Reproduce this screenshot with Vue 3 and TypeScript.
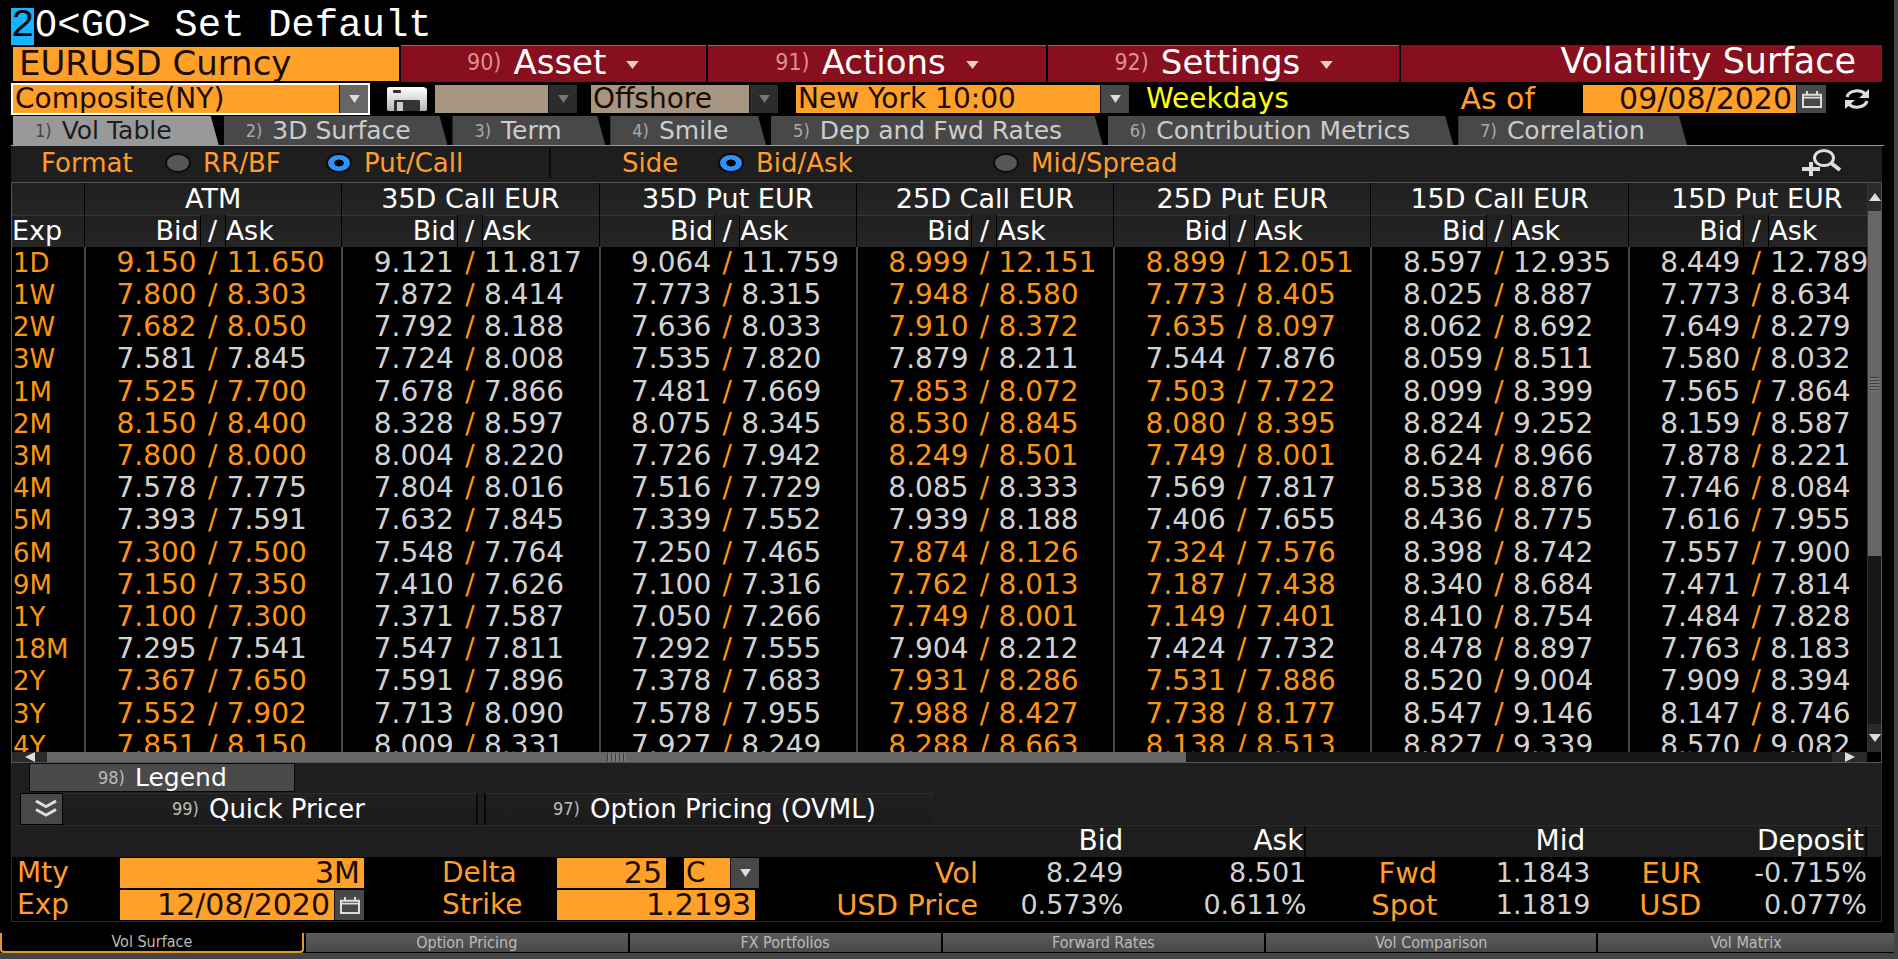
<script setup lang="ts">
import { ref } from 'vue'

const menus = [
  { key: '90)', label: 'Asset' },
  { key: '91)', label: 'Actions' },
  { key: '92)', label: 'Settings' },
]
const tabs = ['Vol Table', '3D Surface', 'Term', 'Smile', 'Dep and Fwd Rates', 'Contribution Metrics', 'Correlation']
const columns = ['ATM', '35D Call EUR', '35D Put EUR', '25D Call EUR', '25D Put EUR', '15D Call EUR', '15D Put EUR']
const screens = ['Vol Surface', 'Option Pricing', 'FX Portfolios', 'Forward Rates', 'Vol Comparison', 'Vol Matrix']
const format = ref('pc')
const side = ref('ba')
const mty = ref('3M')
const expiry = ref('12/08/2020')
const delta = ref('25')
const strike = ref('1.2193')
const asOf = ref('09/08/2020')

// Columns quoted directly by the composite source; the others are interpolated.
const quoted = [0, 3, 4]
// Tenors with no direct quote.
const derived = ['3W', '4M', '5M', '18M']

const raw = `1D 9.150 11.650 9.121 11.817 9.064 11.759 8.999 12.151 8.899 12.051 8.597 12.935 8.449 12.789
1W 7.800 8.303 7.872 8.414 7.773 8.315 7.948 8.580 7.773 8.405 8.025 8.887 7.773 8.634
2W 7.682 8.050 7.792 8.188 7.636 8.033 7.910 8.372 7.635 8.097 8.062 8.692 7.649 8.279
3W 7.581 7.845 7.724 8.008 7.535 7.820 7.879 8.211 7.544 7.876 8.059 8.511 7.580 8.032
1M 7.525 7.700 7.678 7.866 7.481 7.669 7.853 8.072 7.503 7.722 8.099 8.399 7.565 7.864
2M 8.150 8.400 8.328 8.597 8.075 8.345 8.530 8.845 8.080 8.395 8.824 9.252 8.159 8.587
3M 7.800 8.000 8.004 8.220 7.726 7.942 8.249 8.501 7.749 8.001 8.624 8.966 7.878 8.221
4M 7.578 7.775 7.804 8.016 7.516 7.729 8.085 8.333 7.569 7.817 8.538 8.876 7.746 8.084
5M 7.393 7.591 7.632 7.845 7.339 7.552 7.939 8.188 7.406 7.655 8.436 8.775 7.616 7.955
6M 7.300 7.500 7.548 7.764 7.250 7.465 7.874 8.126 7.324 7.576 8.398 8.742 7.557 7.900
9M 7.150 7.350 7.410 7.626 7.100 7.316 7.762 8.013 7.187 7.438 8.340 8.684 7.471 7.814
1Y 7.100 7.300 7.371 7.587 7.050 7.266 7.749 8.001 7.149 7.401 8.410 8.754 7.484 7.828
18M 7.295 7.541 7.547 7.811 7.292 7.555 7.904 8.212 7.424 7.732 8.478 8.897 7.763 8.183
2Y 7.367 7.650 7.591 7.896 7.378 7.683 7.931 8.286 7.531 7.886 8.520 9.004 7.909 8.394
3Y 7.552 7.902 7.713 8.090 7.578 7.955 7.988 8.427 7.738 8.177 8.547 9.146 8.147 8.746
4Y 7.851 8.150 8.009 8.331 7.927 8.249 8.288 8.663 8.138 8.513 8.827 9.339 8.570 9.082`

const rows = raw.split('\n').map((line) => {
  const [tenor, ...v] = line.split(' ')
  return {
    tenor,
    quotes: columns.map((_, i) => ({
      bid: v[i * 2],
      ask: v[i * 2 + 1],
      live: quoted.includes(i) && !derived.includes(tenor),
    })),
  }
})
</script>

<template>
  <main class="terminal">
    <div class="screen">
      <div class="command"><span class="cursor">2</span><span class="zero">0</span>&lt;GO&gt; Set Default</div>

      <header class="titlebar">
        <div class="security">EURUSD Curncy</div>
        <button v-for="m in menus" :key="m.key" class="menu">
          <span class="num">{{ m.key }}</span><span>{{ m.label }}</span>
          <svg class="caret" viewBox="0 0 14 9"><path d="M0 0H14L7 9Z" /></svg>
        </button>
        <h1>Volatility Surface</h1>
      </header>

      <div class="toolbar">
        <div class="combo focused source">
          <select aria-label="Source"><option>Composite(NY)</option></select>
          <span class="drop"><svg viewBox="0 0 12 9"><path d="M0 0H12L6 9Z" /></svg></span>
        </div>
        <button class="save" aria-label="Save">
          <svg viewBox="0 0 44 28" preserveAspectRatio="none">
            <defs><linearGradient id="disk" x1="0" y1="0" x2="0" y2="1"><stop offset="0" stop-color="#fff" /><stop offset="1" stop-color="#b5b5b5" /></linearGradient></defs>
            <path d="M4 2H39L42 4V25Q42 26 40 26H4Q2 26 2 25V4Q2 2 4 2Z" fill="url(#disk)" />
            <rect x="8" y="5" width="8" height="3" rx="1" fill="#333" />
            <path d="M9 16Q9 15 11 15H33Q35 15 35 16V26H9Z" fill="#333" /><rect x="12" y="17" width="6" height="9" fill="#ccc" />
          </svg>
        </button>
        <div class="combo off blank">
          <select aria-label="Portfolio" disabled><option></option></select>
          <span class="drop"><svg viewBox="0 0 12 9"><path d="M0 0H12L6 9Z" /></svg></span>
        </div>
        <div class="combo off shore">
          <select aria-label="Market" disabled><option>Offshore</option></select>
          <span class="drop"><svg viewBox="0 0 12 9"><path d="M0 0H12L6 9Z" /></svg></span>
        </div>
        <div class="combo cut">
          <select aria-label="Cut time"><option>New York 10:00</option></select>
          <span class="drop"><svg viewBox="0 0 12 9"><path d="M0 0H12L6 9Z" /></svg></span>
        </div>
        <span class="weekdays">Weekdays</span>
        <label class="asof" for="asof">As of</label>
        <div class="datebox asofbox">
          <input id="asof" v-model="asOf" />
          <button aria-label="Pick date"><svg viewBox="0 0 20 18" preserveAspectRatio="none"><path d="M1 4H19V17H1Z M1 7H19 M5 0V4 M15 0V4" /></svg></button>
        </div>
        <button class="refresh" aria-label="Refresh">
          <svg viewBox="0 0 26 20" preserveAspectRatio="none">
            <path class="line" d="M3 8C5 1 17 0 21 5 M23 12C21 19 9 20 5 15" />
            <path d="M25 0V9H15Z M1 20V11H11Z" />
          </svg>
        </button>
      </div>

      <nav class="tabs">
        <button v-for="(t, i) in tabs" :key="t" :class="['tab', { current: i === 0 }]">
          <span class="num">{{ i + 1 }})</span>{{ t }}
        </button>
      </nav>

      <div class="filters">
        <fieldset class="format">
          <legend>Format</legend>
          <label class="first"><input v-model="format" type="radio" name="format" value="rr" />RR/BF</label>
          <label><input v-model="format" type="radio" name="format" value="pc" />Put/Call</label>
        </fieldset>
        <fieldset class="side">
          <legend>Side</legend>
          <label class="first"><input v-model="side" type="radio" name="side" value="ba" />Bid/Ask</label>
          <label><input v-model="side" type="radio" name="side" value="ms" />Mid/Spread</label>
        </fieldset>
        <button class="zoom" aria-label="Zoom in">
          <svg viewBox="0 0 40 28" preserveAspectRatio="none">
            <ellipse cx="23" cy="9" rx="9.5" ry="7.5" /><path class="handle" d="M30 14L39 21" />
            <path class="plus" d="M1 20H19 M10 13V27" />
          </svg>
        </button>
      </div>

      <section class="grid">
        <div class="viewport">
          <div class="clip">
            <table class="vols">
              <colgroup>
                <col class="c-exp" />
                <template v-for="c in columns" :key="c"><col /><col class="c-slash" /><col /></template>
              </colgroup>
              <thead>
                <tr>
                  <th></th>
                  <th v-for="c in columns" :key="c" colspan="3" class="edge">{{ c }}</th>
                </tr>
                <tr>
                  <th class="exp">Exp</th>
                  <template v-for="c in columns" :key="c">
                    <th class="bid edge">Bid</th><th class="slash">/</th><th class="ask">Ask</th>
                  </template>
                </tr>
              </thead>
              <tbody>
                <tr v-for="r in rows" :key="r.tenor">
                  <th class="exp">{{ r.tenor }}</th>
                  <template v-for="(q, i) in r.quotes" :key="i">
                    <td :class="['bid', 'edge', { live: q.live }]">{{ q.bid }}</td>
                    <td class="slash">/</td>
                    <td :class="['ask', { live: q.live }]">{{ q.ask }}</td>
                  </template>
                </tr>
              </tbody>
            </table>
          </div>
          <div class="vscroll">
            <button aria-label="Scroll up"><svg viewBox="0 0 12 8"><path d="M0 8H12L6 0Z" /></svg></button>
            <div class="thumb"><i></i></div>
            <div class="rest"></div>
            <button aria-label="Scroll down"><svg viewBox="0 0 12 8"><path d="M0 0H12L6 8Z" /></svg></button>
          </div>
        </div>
        <div class="hscroll">
          <button aria-label="Scroll left"><svg viewBox="0 0 10 10"><path d="M10 0V10L0 5Z" /></svg></button>
          <div class="thumb"><i></i></div>
          <div class="rest"></div>
          <button aria-label="Scroll right"><svg viewBox="0 0 10 10"><path d="M0 0V10L10 5Z" /></svg></button>
        </div>
      </section>

      <section class="panel">
        <button class="legend"><span class="num">98)</span>Legend</button>
        <div class="actions">
          <button class="collapse" aria-label="Collapse"><svg viewBox="0 0 22 18" preserveAspectRatio="none"><path d="M1 1L11 7L21 1 M1 10L11 16L21 10" /></svg></button>
          <button class="quick"><span class="num">99)</span>Quick Pricer</button>
          <button class="ovml"><span class="num">97)</span>Option Pricing (OVML)</button>
        </div>
        <div class="pricer">
          <form class="inputs" @submit.prevent>
            <label for="mty">Mty</label>
            <input id="mty" v-model="mty" />
            <label for="delta" class="mid">Delta</label>
            <div class="deltabox">
              <input id="delta" v-model="delta" />
              <div class="combo cp">
                <select aria-label="Call or put"><option>C</option><option>P</option></select>
                <span class="drop"><svg viewBox="0 0 12 9"><path d="M0 0H12L6 9Z" /></svg></span>
              </div>
            </div>
            <label for="exp">Exp</label>
            <div class="datebox">
              <input id="exp" v-model="expiry" />
              <button type="button" aria-label="Pick date"><svg viewBox="0 0 20 18" preserveAspectRatio="none"><path d="M1 4H19V17H1Z M1 7H19 M5 0V4 M15 0V4" /></svg></button>
            </div>
            <label for="strike" class="mid">Strike</label>
            <input id="strike" v-model="strike" class="strike" />
          </form>
          <table class="quotes">
            <colgroup><col class="q0" /><col class="q1" /><col class="q2" /><col class="q3" /><col class="q4" /><col class="q5" /><col /><col class="q7" /></colgroup>
            <thead>
              <tr><th></th><th class="flush">Bid</th><th class="rule">Ask</th><th></th><th>Mid</th><th></th><th class="rule">Deposit</th><th></th></tr>
            </thead>
            <tbody>
              <tr><th>Vol</th><td>8.249</td><td>8.501</td><th>Fwd</th><td>1.1843</td><th>EUR</th><td>-0.715%</td><td></td></tr>
              <tr><th>USD Price</th><td>0.573%</td><td>0.611%</td><th>Spot</th><td>1.1819</td><th>USD</th><td>0.077%</td><td></td></tr>
            </tbody>
          </table>
        </div>
      </section>
    </div>

    <nav class="screens">
      <button v-for="(s, i) in screens" :key="s" :class="{ on: i === 0 }">{{ s }}</button>
    </nav>
  </main>
</template>

<style>
html, body { background: #444; overflow: hidden; }
</style>

<style scoped>
* { box-sizing: border-box; }
.terminal {
  height: 100vh;
  min-width: 1400px;
  padding-bottom: 6px;
  display: flex;
  flex-direction: column;
  background: #444;
  color: #fff;
  font-family: "DejaVu Sans", sans-serif;
  font-size: 28px;
  line-height: 32px;
}
button, input, select { font: inherit; color: inherit; border: 0; border-radius: 0; margin: 0; padding: 0; background: none; min-width: 0; }
button { display: flex; align-items: center; white-space: nowrap; cursor: pointer; }
svg { display: block; fill: #ddd; }
.num { font-family: "DejaVu Sans Condensed", "DejaVu Sans", sans-serif; font-size: 18px; color: #aaa; margin-right: 10px; }

.screen { flex: 1; min-height: 0; display: flex; flex-direction: column; background: #000; margin-right: 4px; padding: 0 10px 11px 11px; }

.command { height: 45px; padding-top: 5px; font-family: "Liberation Mono", monospace; font-size: 39px; line-height: 37px; white-space: pre; flex: none; }
.cursor { display: inline-block; height: 37px; background: #14b4ff; color: #000; }
.zero { font-family: "DejaVu Sans", sans-serif; font-size: 36px; }

.titlebar { display: grid; grid-template-columns: 388fr 305fr 339fr 351fr 481fr; height: 38px; gap: 2px; flex: none; font-size: 34px; line-height: 33px; padding-right: 2px; }
.security { background: #ffa028; color: #1a0c00; margin: 2px 0 2px 2px; padding-left: 6px; line-height: 32px; }
.menu { justify-content: center; background: #870f1e; border-top: 1px solid #b05a64; height: 37px; padding-bottom: 3px; }
.menu .num { font-size: 23px; color: #dc8f98; margin-right: 12px; }
.caret { width: 13px; height: 8px; margin: 4px 0 0 20px; fill: #eec8cc; }
h1 { margin: 0; background: #870f1e; height: 37px; font: inherit; font-size: 35px; text-align: right; padding-right: 26px; }

.toolbar { display: flex; height: 32px; flex: none; align-items: center; padding-right: 14px; }
.combo { display: flex; height: 28px; background: #ffa028; color: #1a0c00; }
.combo select { flex: 1; appearance: none; padding-left: 2px; line-height: 28px; height: 28px; opacity: 1; outline: 0; }
.drop { width: 29px; height: 28px; background: #484848; display: grid; place-items: center; border-left: 1px solid #111; flex: none; }
.drop svg { width: 11px; height: 8px; }
.off { background: #a69580; }
.off .drop { background: #2c2c2c; } .off .drop svg { fill: #777; }
.focused { border: 2px solid #fff; height: 32px; }
.focused .drop { background: #666; }
.source { width: 359px; }
.save { width: 44px; margin: 0 6px 0 15px; } .save svg { width: 44px; height: 28px; }
.blank { width: 142px; margin-right: 14px; }
.shore { width: 187px; margin-right: 18px; } .cut { width: 333px; margin-right: 17px; }
.weekdays { color: #ffff00; }
.asof { margin-left: auto; margin-right: 48px; color: #ff9d2b; font-size: 30px; }
.datebox { display: flex; height: 28px; }
.datebox input, .inputs input { background: #ffa028; color: #1a0c00; text-align: right; padding-right: 4px; outline: 0; height: 28px; font-size: 30px; }
.datebox input { flex: 1; }
.datebox button { width: 30px; background: #484848; border-left: 1px solid #111; justify-content: center; }
.datebox svg { width: 20px; height: 17px; fill: none; stroke: #ddd; stroke-width: 2; }
.asofbox { width: 243px; margin-right: 18px; }
.refresh svg { width: 26px; height: 20px; }
.refresh .line { fill: none; stroke: #ddd; stroke-width: 3; }

.tabs { display: grid; grid-template-columns: 206fr 224fr 153fr 156fr 332fr 346fr 229fr; height: 31px; flex: none; padding: 1px 197px 1px 2px; gap: 5px; border-bottom: 1px solid #999; font-size: 25px; }
.tab { background: #484848; color: #ccc; padding-left: 22px; height: 29px; clip-path: polygon(0 0, calc(100% - 8px) 0, 100% 100%, 0 100%); }
.tab .num { color: #aaa; }
.current { background: #999; color: #1c1c1c; } .current .num { color: #444; }

.filters { display: flex; height: 36px; flex: none; background: #1e1e1e; color: #ff9d2b; font-size: 26px; align-items: center; margin-right: 2px; padding-bottom: 2px; }
fieldset { border: 0; margin: 0; padding: 0; display: flex; align-items: center; height: 30px; }
legend { padding: 0; float: left; line-height: 28px; }
.format { width: 540px; padding-left: 30px; border-right: 2px solid #0a0a0a; }
.side { padding-left: 71px; flex: 1; }
.format legend { width: 124px; } .side legend { width: 96px; }
fieldset label { display: flex; align-items: center; gap: 12px; white-space: nowrap; }
.format .first { width: 161px; } .side .first { width: 275px; }
input[type="radio"] { appearance: none; width: 26px; height: 20px; border-radius: 50%; background: #565656; border: 2px solid #0c0c0c; flex: none; }
input[type="radio"]:checked { background: radial-gradient(closest-side, #000 42%, #2f92fa 46%); }
.zoom { margin-right: 41px; } .zoom svg { width: 40px; height: 28px; fill: none; stroke: #ddd; stroke-width: 3; }
.zoom .handle, .zoom .plus { stroke-width: 4; }

.grid { flex: 1; min-height: 0; display: flex; flex-direction: column; border: 1px solid #555; margin-right: 2px; }
.viewport { flex: 1; min-height: 0; display: flex; }
.clip { flex: 1; min-width: 0; overflow: hidden; }
table { border-collapse: separate; border-spacing: 0; table-layout: fixed; }
th, td { padding: 0; font-weight: normal; white-space: nowrap; overflow: visible; }
.vols { width: calc(100% + 18px); }
.c-exp { width: 72px; } .c-slash { width: 26px; }
.vols thead th { background: linear-gradient(#1f1f1f, #262626); border-top: 1px solid #343434; height: 32px; line-height: 29px; padding-bottom: 2px; font-size: 27px; }
.vols thead .edge { border-left: 1px solid #000; }
.vols thead tr:first-child th { border-top: 0; }
.vols thead .slash { border: 1px solid #000; border-width: 0 1px; }
.vols tbody tr { height: 32px; }
.vols tbody tr:nth-child(5n) { height: 33px; }
.vols tbody .edge { border-left: 2px solid #444; }
.bid { text-align: right; padding-right: 1px; }
.ask { text-align: left; }
.vols tbody .bid { padding-right: 3px; }
.vols tbody .ask { padding-left: 1px; }
.vols tbody td { color: #d2d2d2; }
.vols tbody td.live, .vols tbody .exp, .vols tbody td.slash { color: #fa9614; }
.slash { text-align: center; }
.exp { text-align: left; }
.vols tbody .exp { padding-left: 1px; font-size: 26px; }

.vscroll { width: 14px; display: flex; flex-direction: column; background: #181818; border-left: 1px solid #333; }
.vscroll button { height: 28px; justify-content: center; background: #2a2a2a; flex: none; }
.vscroll svg { width: 12px; height: 8px; }
.vscroll .thumb { flex: 345; } .vscroll .rest { flex: 168; }
.thumb { background: #666; display: grid; place-items: center; }
.vscroll i { width: 9px; height: 14px; background: repeating-linear-gradient(#3c3c3c 0 1px, #777 1px 3px); }
.hscroll { display: flex; height: 10px; background: #181818; margin-right: 14px; flex: none; }
.hscroll button { width: 35px; background: #2a2a2a; justify-content: center; }
.hscroll svg { width: 10px; height: 10px; }
.hscroll .thumb { flex: 1138; } .hscroll .rest { flex: 646; }
.hscroll i { width: 19px; height: 8px; background: repeating-linear-gradient(90deg, #3c3c3c 0 1px, #777 1px 4px); }

.panel { flex: none; background: #1e1e1e; margin-right: 2px; font-size: 26px; border: 1px solid #2a2a2a; border-width: 0 1px 1px; }
.legend { width: 266px; height: 29px; margin-left: 17px; background: #4a4a4a; border: 1px solid #080808; padding-left: 68px; font-size: 25px; }
.panel .num { color: #bbb; }
.actions { display: flex; height: 34px; border-bottom: 1px solid #2a2a2a; align-items: center; }
.actions button { height: 32px; border-top: 1px solid #2c2c2c; background: linear-gradient(#222, #1a1a1a); }
.actions .collapse { width: 43px; margin-left: 8px; padding-left: 8px; background: #484848; border: 1px solid #000; justify-content: center; }
.collapse svg { width: 22px; height: 17px; fill: none; stroke: #ddd; stroke-width: 3; }
.quick { width: 415px; padding-left: 109px; border-right: 2px solid #080808; margin-right: 6px; }
.ovml { width: 450px; padding-left: 67px; border-left: 2px solid #080808; }
.pricer { display: flex; align-items: flex-end; }
.inputs { display: grid; grid-template-columns: 103px 244px 193px 202px; grid-auto-rows: 32px; flex: 758; background: #000; align-items: center; padding-left: 5px; font-size: 28px; }
.inputs label, .quotes th { color: #ff9d2b; }
.inputs .mid { padding-left: 78px; }
.inputs input { width: 100%; height: 30px; }
.inputs .datebox, .inputs .combo { height: 30px; }
.inputs .drop, .inputs .combo select { height: 30px; }
.deltabox { display: flex; gap: 18px; }
.inputs .deltabox > input { width: 109px; }
.inputs .strike { width: 198px; }
.cp { width: 75px; }
.quotes { flex: 1114; text-align: right; }
.quotes thead { font-size: 28px; }
.quotes thead th { color: #fff; height: 31px; line-height: 29px; padding-right: 5px; padding-bottom: 2px; }
.quotes thead .flush { padding-right: 0; }
.quotes thead .rule { padding-right: 1px; border-right: 2px solid #080808; }
.quotes th, .quotes td { text-align: right; height: 32px; }
.quotes tbody { background: #000; }
.quotes tbody td { color: #d2d2d2; font-size: 27px; }
.quotes tbody th { font-size: 29px; }
.q0 { width: 18.6%; } .q1 { width: 13.1%; } .q2 { width: 16.5%; } .q3 { width: 11.8%; } .q4 { width: 13.8%; } .q5 { width: 10%; } .q7 { width: 14px; }

.screens { display: grid; grid-template-columns: 304fr 322fr 311fr 322fr 330fr 296fr; height: 20px; flex: none; background: #000; margin-right: 4px; gap: 2px; font: 16px/18px "DejaVu Sans Condensed", "DejaVu Sans", sans-serif; }
.screens button { justify-content: center; height: 19px; background: linear-gradient(#5c5c5c, #484848); color: #bbb; }
.screens .on { background: #000; border: 2px solid #e8922a; border-top: 0; border-radius: 0 0 4px 4px; height: 20px; }
</style>
